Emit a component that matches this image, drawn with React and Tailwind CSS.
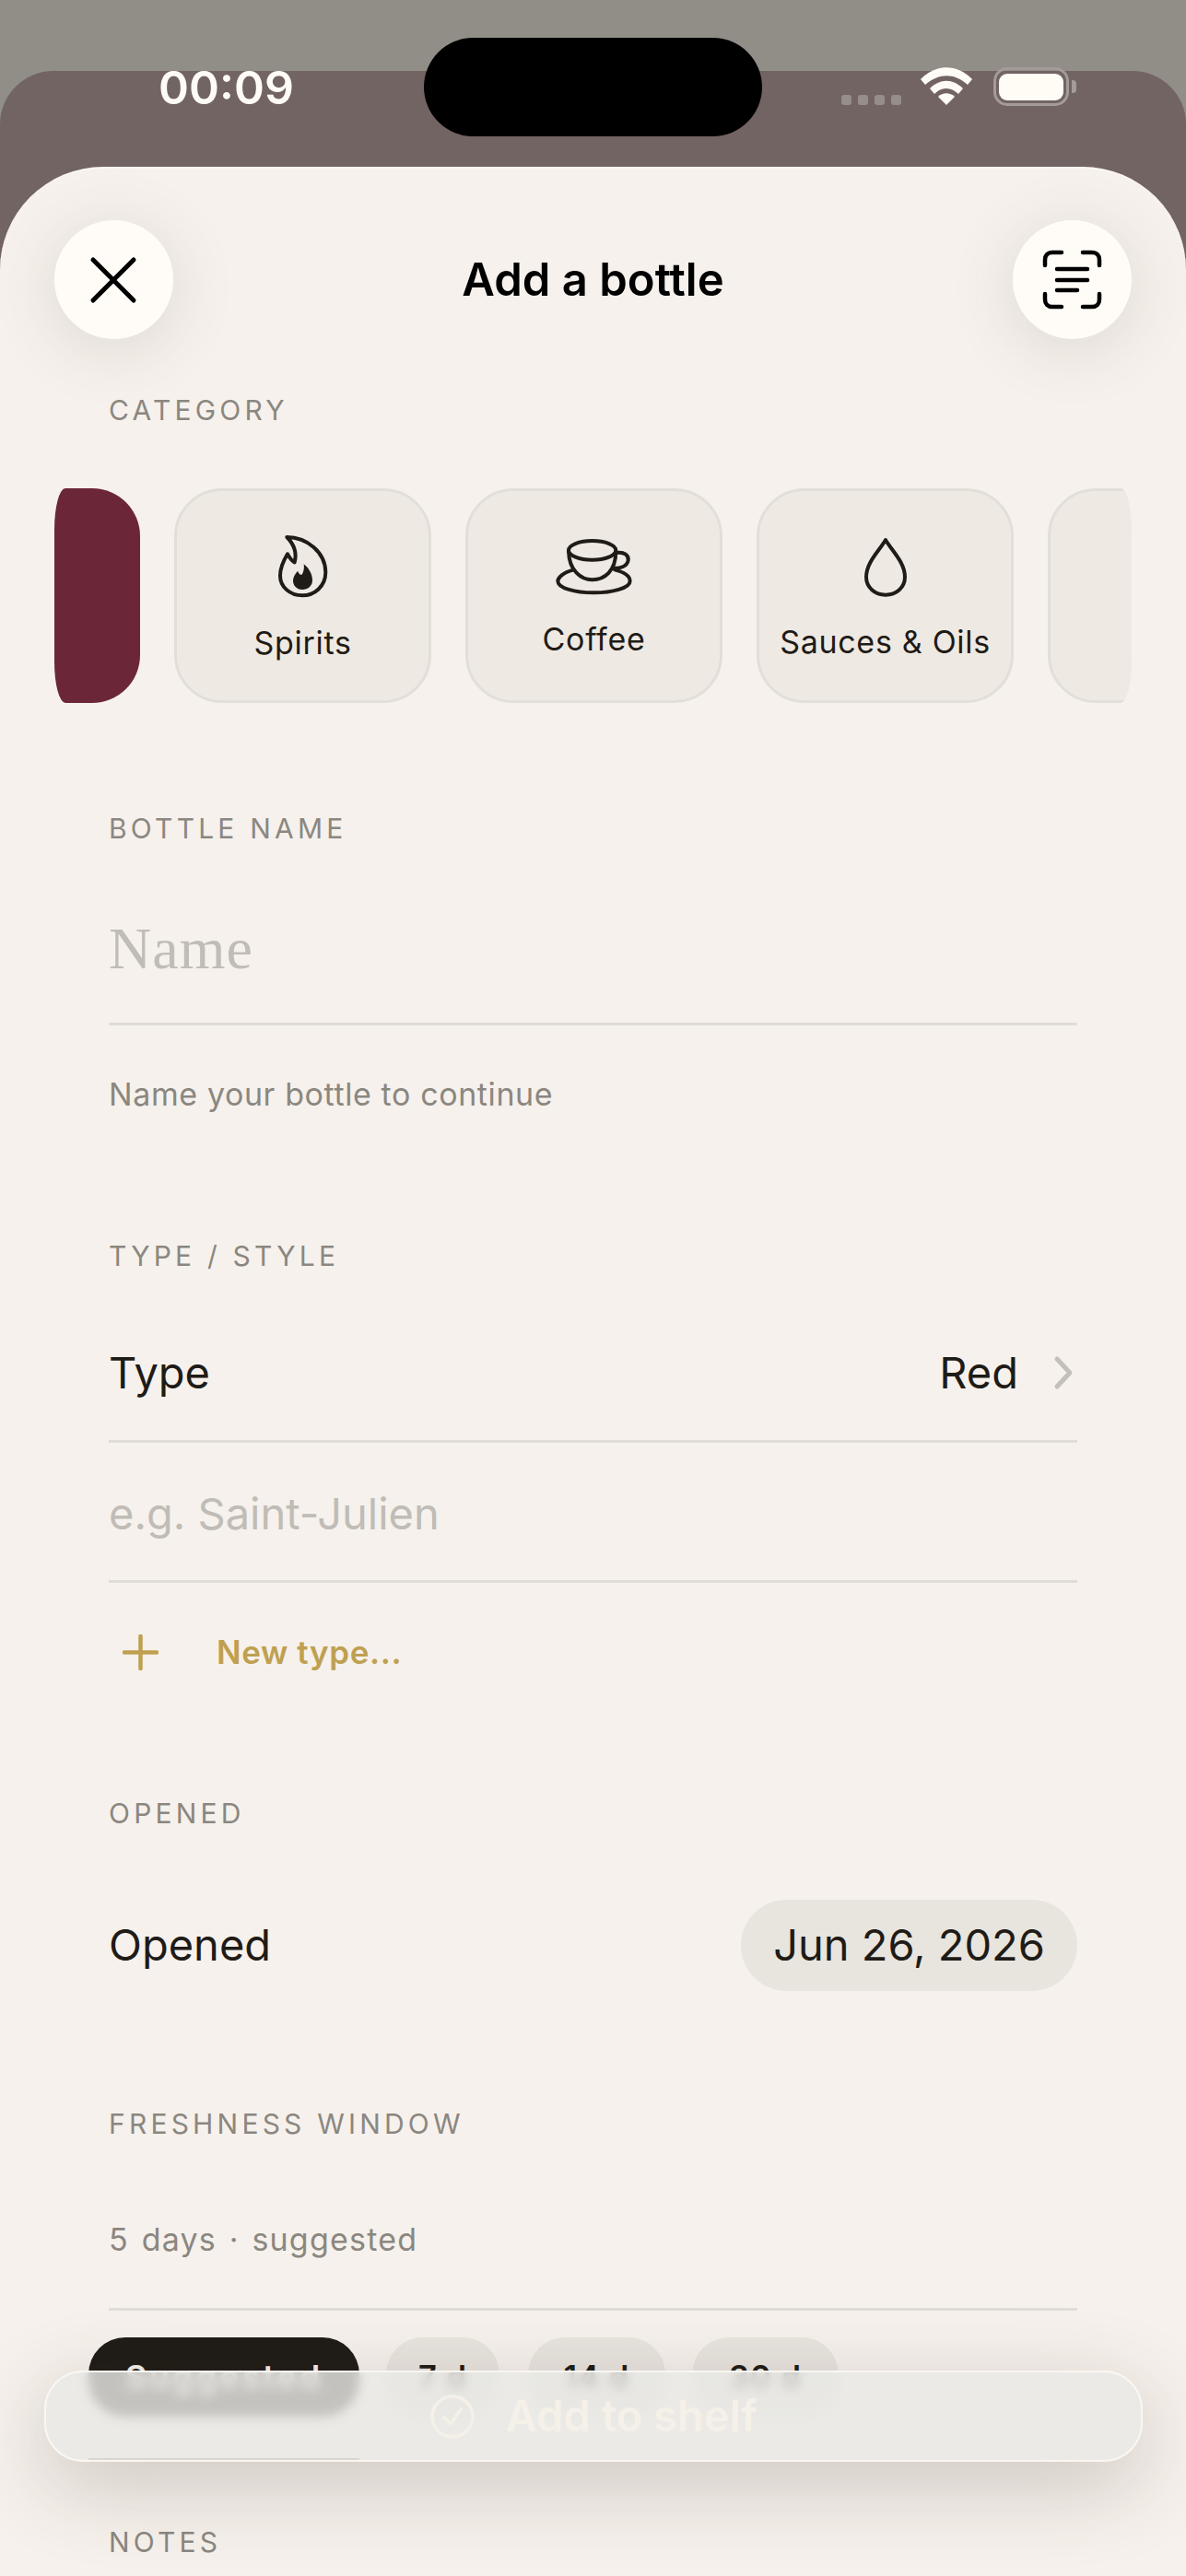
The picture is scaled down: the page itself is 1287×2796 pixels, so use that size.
import React from "react";

const font = "[font-family:Inter,'Liberation_Sans',sans-serif]";

function Label({ children, className }) {
  return (
    <div className={`text-[30px] leading-[36px] tracking-[4.2px] text-[#8b8780] ${className}`}>
      {children}
    </div>
  );
}

function Card({ children, label, pad, gap }) {
  return (
    <div className={`flex h-[233px] w-[279px] shrink-0 flex-col items-center rounded-[52px] border-[3px] border-[#e2ded8] bg-[#eee9e3] ${pad}`}>
      {children}
      <div className={`text-[34px] leading-[40px] tracking-[0.7px] text-[#1f1b16] ${gap}`}>{label}</div>
    </div>
  );
}

function Flame() {
  return (
    <svg width="61.67" height="75" viewBox="110 175 185 225" fill="none" stroke="#1f1b16" strokeWidth="12" strokeLinejoin="round">
      <path d="M150 190 C215 190 276 240 276 305 C276 350 240 380 200 380 C160 380 128 352 128 315 C128 290 140 265 152 245 C158 255 165 268 175 272 C182 245 175 215 150 190 Z" />
      <path stroke="none" fill="#1f1b16" d="M205 278 C225 293 233 315 233 331 C233 349 218 361 200 361 C182 361 170 348 170 332 C170 320 177 310 185 300 C189 309 193 312 198 313 C205 305 207 290 205 278 Z" />
    </svg>
  );
}

function Cup() {
  return (
    <svg width="86.67" height="66.67" viewBox="1020 180 260 200" fill="none" stroke="#1f1b16" strokeWidth="12" strokeLinecap="round" strokeLinejoin="round">
      <ellipse cx="1145" cy="232" rx="77" ry="31" />
      <path d="M1068 235 C1070 300 1110 328 1145 328 C1185 328 1222 300 1222 235" />
      <path d="M1222 240 C1250 235 1265 250 1262 265 C1258 285 1235 292 1212 290" />
      <path d="M1083 296 C1050 305 1033 320 1033 332 C1033 355 1090 370 1150 370 C1210 370 1268 355 1268 332 C1268 315 1245 302 1218 295" />
    </svg>
  );
}

function Drop() {
  return (
    <svg width="50" height="66.67" viewBox="465 185 150 200" fill="none" stroke="#1f1b16" strokeWidth="12" strokeLinejoin="round">
      <path d="M540 197 C560 232 603 270 603 318 C603 352 575 376 540 376 C505 376 477 352 477 318 C477 270 520 232 540 197 Z" />
    </svg>
  );
}

function Chip({ children, className }) {
  return (
    <div className={`flex h-[86px] items-center justify-center rounded-[40px] font-semibold ${className}`}>
      {children}
    </div>
  );
}

export default function App() {
  return (
    <div className={`relative h-[2796px] w-[1287px] overflow-hidden bg-[#918e88] pt-[77px] ${font}`}>
      {/* status bar */}
      <div className="absolute left-0 right-0 top-0 z-20 h-[150px]">
        <div className="absolute left-[172px] top-[66px] text-[50px] font-semibold leading-[58px] text-[#fffcf6]">00:09</div>
        <div className="absolute left-[460px] top-[41px] h-[107px] w-[367px] rounded-[54px] bg-black" />
        <div className="absolute left-[913px] top-[103px] flex gap-[7px]">
          <div className="h-[11px] w-[11px] rounded-[3px] bg-[#958e8b]" />
          <div className="h-[11px] w-[11px] rounded-[3px] bg-[#958e8b]" />
          <div className="h-[11px] w-[11px] rounded-[3px] bg-[#958e8b]" />
          <div className="h-[11px] w-[11px] rounded-[3px] bg-[#958e8b]" />
        </div>
        <svg className="absolute left-[999px] top-[73px]" width="56" height="41" viewBox="0 0 56 41">
          <path fill="#fffcf6" d="M0 13 C16 -4 40 -4 56 13 L51 19 C37 6 19 6 5 19 Z" />
          <path fill="#fffcf6" d="M10 23 C21 12 35 12 46 23 L41 29 C33 21 23 21 15 29 Z" />
          <path fill="#fffcf6" d="M19 32 C24 27 32 27 37 32 L28 41 Z" />
        </svg>
        <div className="absolute left-[1078px] top-[73px] flex h-[42px] w-[82px] items-center justify-center rounded-[15px] border-[3px] border-[#a39c98]">
          <div className="h-[29px] w-[70px] rounded-[9px] bg-[#fffcf6]" />
        </div>
        <div className="absolute left-[1163px] top-[87px] h-[14px] w-[5px] rounded-r-[4px] bg-[#a39c98]" />
      </div>

      {/* back sheet */}
      <div className="h-full rounded-t-[58px] bg-[#726462] pt-[104px]">
        {/* front sheet */}
        <div className="h-full rounded-t-[112px] border-t-[2px] border-[#fbf8f3] bg-[#f6f1ec]">
          {/* header */}
          <div className="flex items-center justify-between px-[59px] pt-[56px]">
            <button className="flex h-[129px] w-[129px] items-center justify-center rounded-full bg-[#fffcf7] shadow-[0_10px_70px_rgba(90,75,60,0.15)]">
              <svg width="60" height="60" viewBox="0 0 60 60" fill="none" stroke="#000" strokeWidth="5" strokeLinecap="round">
                <path d="M7 8 L51 52 M51 8 L7 52" />
              </svg>
            </button>
            <div className="text-[49px] font-semibold leading-[60px] text-black">Add a bottle</div>
            <button className="flex h-[129px] w-[129px] items-center justify-center rounded-full bg-[#fffcf7] shadow-[0_10px_70px_rgba(90,75,60,0.15)]">
              <svg width="67" height="67" viewBox="0 0 67 67" fill="none" stroke="#000" strokeWidth="4.5" strokeLinecap="round">
                <path d="M4 18 V12 C4 7 7 4 12 4 H22 M45 4 H55 C60 4 63 7 63 12 V18 M4 49 V55 C4 60 7 63 12 63 H22 M45 63 H55 C60 63 63 60 63 55 V49" />
                <path d="M17 22 H50 M17 34 H50 M17 45 H39" />
              </svg>
            </button>
          </div>

          <div className="px-[118px]">
            <Label className="mt-[59px]">CATEGORY</Label>
          </div>

          {/* category scroller */}
          <div className="mx-[59px] mt-[67px] flex gap-[37px] overflow-hidden rounded-[12px/45px]">
            <div className="-ml-[186px] h-[233px] w-[279px] shrink-0 rounded-[52px] bg-[#6b2737]" />
            <Card label="Spirits" pad="pt-[45px]" gap="mt-[25px]"><Flame /></Card>
            <Card label="Coffee" pad="pt-[47px]" gap="mt-[27px]"><Cup /></Card>
            <Card label="Sauces & Oils" pad="pt-[49px]" gap="mt-[28px]"><Drop /></Card>
            <Card label="" pad="pt-[49px]" gap="mt-[28px]" />
          </div>

          <div className="px-[118px]">
            <Label className="mt-[118px]">BOTTLE NAME</Label>
            <div className="border-b-[3px] border-[#e0dcd6] pb-[45px] pt-[78px] [font-family:'Liberation_Serif',serif] text-[64px] leading-[70px] tracking-[1px] text-[#c0bcb6]">
              Name
            </div>
            <div className="mt-[55px] text-[34px] leading-[40px] tracking-[0.6px] text-[#8b8780]">
              Name your bottle to continue
            </div>

            <Label className="mt-[137px]">TYPE / STYLE</Label>
            <div className="flex items-center justify-between border-b-[3px] border-[#e0dcd6] pb-[43px] pt-[79px] text-[47px] leading-[60px] text-[#1f1b16]">
              <span>Type</span>
              <span className="flex items-center gap-[38px]">
                Red
                <svg className="mr-[4px]" width="22" height="38" viewBox="0 0 22 38" fill="none" stroke="#c3bfb9" strokeWidth="5" strokeLinecap="round" strokeLinejoin="round">
                  <path d="M4 4 L18 19 L4 34" />
                </svg>
              </span>
            </div>
            <div className="border-b-[3px] border-[#e0dcd6] pb-[42px] pt-[47px] text-[47px] leading-[60px] text-[#c0bcb6]">
              e.g. Saint-Julien
            </div>
            <div className="flex items-center pt-[55px]">
              <svg className="ml-[15px]" width="39" height="39" viewBox="0 0 39 39" fill="none" stroke="#bfa050" strokeWidth="4.5" strokeLinecap="round">
                <path d="M19.5 2 V37 M2 19.5 H37" />
              </svg>
              <span className="ml-[63px] text-[35px] font-semibold leading-[40px] tracking-[0.6px] text-[#bfa050]">New type...</span>
            </div>

            <Label className="mt-[137px]">OPENED</Label>
            <div className="mt-[76px] flex items-center justify-between text-[47px] text-[#1f1b16]">
              <span>Opened</span>
              <span className="flex h-[99px] w-[365px] items-center justify-center rounded-full bg-[#e8e4de]">Jun 26, 2026</span>
            </div>

            <Label className="mt-[126px]">FRESHNESS WINDOW</Label>
            <div className="mt-[88px] text-[34px] leading-[40px] tracking-[1.2px] [word-spacing:3px] text-[#8b8780]">5 days · suggested</div>
            <div className="mt-[54px] border-b-[3px] border-[#e0dcd6]" />
          </div>

          <div className="ml-[96px] mt-[29px] flex">
            <Chip className="w-[294px] bg-[#1f1b16] text-[36px] tracking-[3px] text-[#f6f1ec]">Suggested</Chip>
            <Chip className="ml-[29px] w-[123px] bg-[#e8e4de] text-[34.5px] tracking-[1px] text-[#1f1b16]">7 d</Chip>
            <Chip className="ml-[31px] w-[149px] bg-[#e8e4de] text-[34.5px] tracking-[1px] text-[#1f1b16]">14 d</Chip>
            <Chip className="ml-[29px] w-[159px] bg-[#e8e4de] text-[34.5px] tracking-[1px] text-[#1f1b16]">30 d</Chip>
          </div>

          <div className="px-[118px]">
            <Label className="mt-[118px]">NOTES</Label>
          </div>
        </div>
      </div>

      {/* floating action */}
      <div className="absolute left-[48px] top-[2573px] z-10 flex h-[99px] w-[1192px] items-center justify-center overflow-hidden rounded-[42px] border-[2px] border-[#faf7f2] bg-[rgba(232,232,228,0.82)] shadow-[0_24px_90px_rgba(70,60,45,0.24)] backdrop-blur-[6px]">
        <svg className="blur-[0.5px]" width="50" height="50" viewBox="0 0 50 50" fill="none" stroke="#f5f0e8" strokeWidth="3.5" strokeLinecap="round" strokeLinejoin="round">
          <circle cx="25" cy="25" r="22" />
          <path d="M16 26 L23 33 L34 17" />
        </svg>
        <span className="ml-[33px] text-[47px] font-semibold text-[#f5f0e8] blur-[0.5px]">Add to shelf</span>
        <div className="absolute bottom-0 left-[46px] h-[2px] w-[294px] bg-[rgba(120,110,100,0.16)]" />
      </div>
    </div>
  );
}
